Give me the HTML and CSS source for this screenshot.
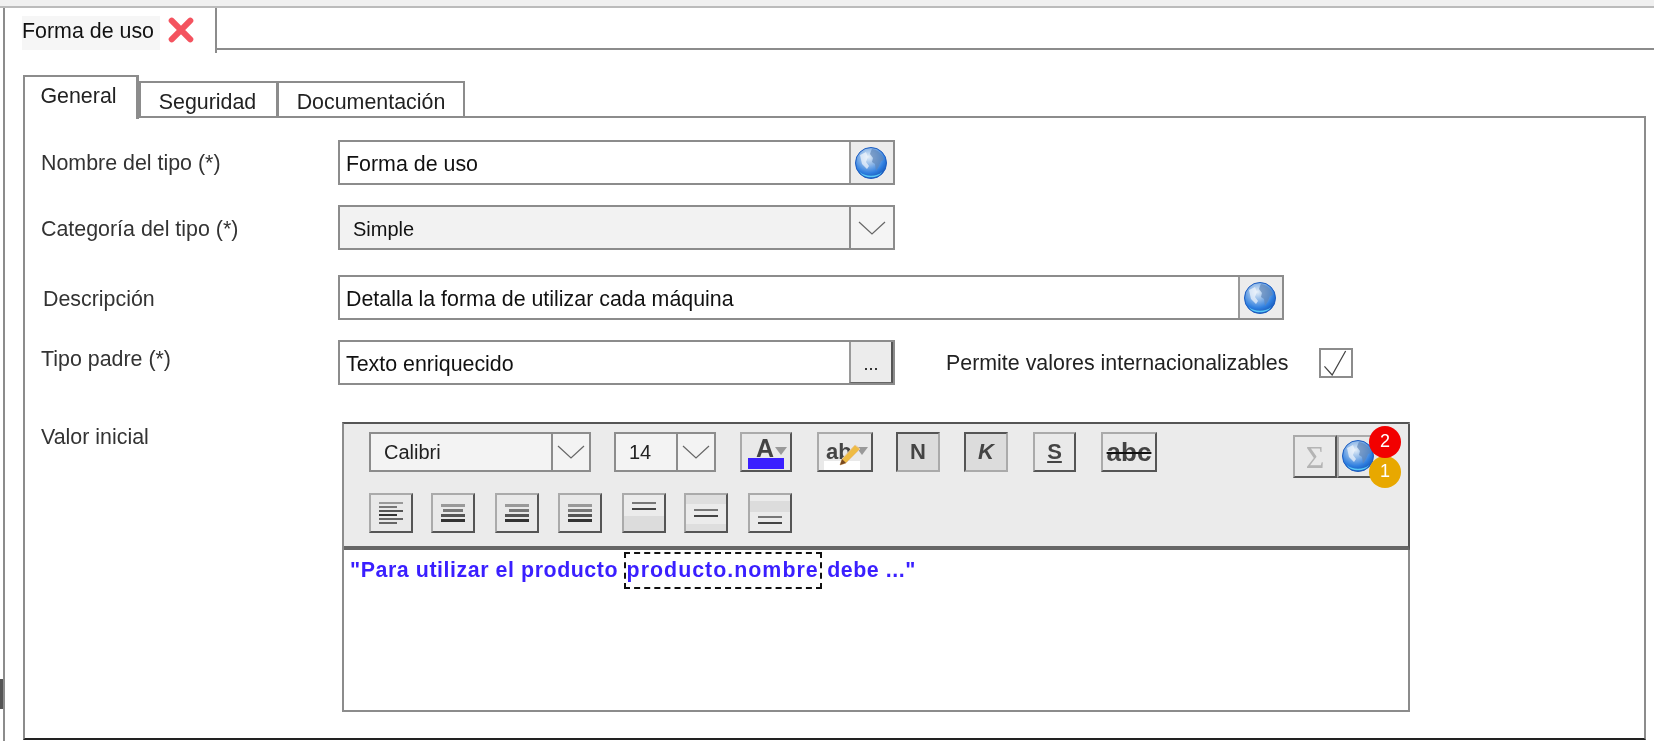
FILE: index.html
```html
<!DOCTYPE html>
<html lang="es">

<head>
  <meta charset="UTF-8" />
  <meta name="viewport" content="width=device-width, initial-scale=1.0" />
  <title>Forma de uso</title>
  <link rel="stylesheet" href="styles.css">
</head>

<body>
  <svg class="defs" width="0" height="0">
    <defs>
      <radialGradient id="globeFill" cx="42%" cy="30%" r="75%">
        <stop offset="0" stop-color="#e4eef8" />
        <stop offset="0.35" stop-color="#8fb8e8" />
        <stop offset="0.7" stop-color="#2f7fe0" />
        <stop offset="1" stop-color="#1250b0" />
      </radialGradient>
      <symbol id="globe" viewBox="0 0 32 32">
        <circle cx="16" cy="16" r="15.5" fill="url(#globeFill)" stroke="#1c5cc0" />
        <path d="M17 2c6 1 11 5 12 11l-3 1-2 5-3 5-1-7-3-2 1-4-3-4 1-3z" fill="#5f86b8" opacity=".7" />
        <path d="M5 8l6-3 2 5-2 5 3 4-2 3-5-5z" fill="#f2f7fc" opacity=".7" />
        <path d="M5 25c5 5 17 5 22 0-3 7-19 7-22 0z" fill="#58c8f6" />
      </symbol>
      <symbol id="chevron" viewBox="0 0 28 16">
        <polyline points="1,2 14,14 27,2" fill="none" stroke="#666" stroke-width="1.2" />
      </symbol>
    </defs>
  </svg>

  <div class="page">
    <div class="top-band"></div>

    <div class="doc">
      <div class="doc-tabs">
        <div class="doc-tab">
          <span class="doc-tab-label">Forma de uso</span>
          <svg class="close-icon" width="26" height="26" viewBox="0 0 28 28">
            <path d="M4 4l20 20M24 4L4 24" stroke="#f4535f" stroke-width="6.5" stroke-linecap="round" />
          </svg>
        </div>
        <div class="doc-tabs-rest"></div>
      </div>

      <div class="doc-body">
        <div class="tabs">
          <div class="tab tab-active">General</div>
          <div class="tab tab-seguridad">Seguridad</div>
          <div class="tab tab-doc">Documentación</div>
        </div>

        <div class="panel">
          <div class="row row-nombre">
            <label class="field-label">Nombre del tipo (*)</label>
            <div class="field field-short">
              <span class="field-value">Forma de uso</span>
              <span class="field-btn"><svg width="32" height="32"><use href="#globe" /></svg></span>
            </div>
          </div>

          <div class="row row-categoria">
            <label class="field-label label-low">Categoría del tipo (*)</label>
            <div class="field field-short field-select">
              <span class="field-value">Simple</span>
              <span class="field-btn field-arrow"><svg width="28" height="16"><use href="#chevron" /></svg></span>
            </div>
          </div>

          <div class="row row-descripcion">
            <label class="field-label label-shift">Descripción</label>
            <div class="field field-long">
              <span class="field-value">Detalla la forma de utilizar cada máquina</span>
              <span class="field-btn"><svg width="32" height="32"><use href="#globe" /></svg></span>
            </div>
          </div>

          <div class="row row-padre">
            <label class="field-label label-raised">Tipo padre (*)</label>
            <div class="field field-short">
              <span class="field-value">Texto enriquecido</span>
              <span class="field-btn field-dots">...</span>
            </div>
            <span class="check-label">Permite valores internacionalizables</span>
            <span class="checkbox">
              <svg width="30" height="26" viewBox="0 0 30 27">
                <polyline points="3,17 11,26 25,1" fill="none" stroke="#444" stroke-width="1.3" />
              </svg>
            </span>
          </div>

          <div class="row row-valor">
            <label class="field-label label-top">Valor inicial</label>
            <div class="editor">
              <div class="toolbar">
                <div class="tool-row">
                  <div class="tool-select select-font">
                    <span class="tool-select-value">Calibri</span>
                    <span class="tool-select-arrow"><svg width="28" height="16"><use href="#chevron" /></svg></span>
                  </div>
                  <div class="tool-select select-size">
                    <span class="tool-select-value">14</span>
                    <span class="tool-select-arrow"><svg width="28" height="16"><use href="#chevron" /></svg></span>
                  </div>
                  <button class="tool btn-color"><b class="glyph-a">A</b><i class="drop"></i><i class="color-bar"></i></button>
                  <button class="tool btn-mark">
                    <i class="mark-bar"></i><b class="glyph-ab">ab</b><i class="drop"></i>
                    <svg class="pencil" width="22" height="22" viewBox="0 0 22 22">
                      <path d="M16 1l5 4L7 19l-6 2 2-6z" fill="#eebb44" stroke="#e8c8a0" />
                      <path d="M1 21l2-6 4 4z" fill="#7a4a20" />
                    </svg>
                  </button>
                  <button class="tool tool-down btn-n">N</button>
                  <button class="tool tool-down btn-k">K</button>
                  <button class="tool btn-s">S</button>
                  <button class="tool btn-abc">abc</button>
                  <div class="tool-end">
                    <button class="tool btn-sigma">Σ</button>
                    <button class="tool btn-globe"><svg width="32" height="32"><use href="#globe" /></svg></button>
                    <span class="badge badge-red">2</span>
                    <span class="badge badge-yellow">1</span>
                  </div>
                </div>

                <div class="tool-row tool-row-2">
                  <button class="tool align a-left"><i></i><i></i><i></i><i></i><i></i><i></i></button>
                  <button class="tool align a-center"><i></i><i></i><i></i><i></i></button>
                  <button class="tool align a-right"><i></i><i></i><i></i><i></i></button>
                  <button class="tool align a-just"><i></i><i></i><i></i><i></i></button>
                  <button class="tool valign v-top"><i></i><i></i></button>
                  <button class="tool valign v-mid"><i></i><i></i></button>
                  <button class="tool valign v-bot"><i></i><i></i></button>
                </div>
              </div>

              <div class="editor-text">"Para utilizar el producto <span class="token">producto.nombre</span> debe ..."</div>
            </div>
          </div>
        </div>
      </div>
    </div>
    <span class="edge-mark"></span>
  </div>
</body>

</html>
```

FILE: styles.css
```css
html,
body {
  margin: 0;
  height: 100%;
  overflow: hidden;
  background: #fff;
}

.defs {
  position: absolute;
}

.page {
  position: relative;
  width: 1654px;
  height: 741px;
  overflow: hidden;
  background: #fff;
  color: #222;
  font-family: "Liberation Sans", Arial, sans-serif;
  font-size: 21.4px;
  filter: blur(0.5px);
}

.top-band {
  box-sizing: border-box;
  height: 8px;
  background: #f0f0f0;
  border-bottom: 2px solid #bbb;
}

.doc {
  margin-left: 3px;
  height: 733px;
  box-sizing: border-box;
  border-left: 2px solid #8c8c8c;
}

.doc-tabs {
  display: flex;
  height: 42px;
}

.doc-tab {
  width: 212px;
  box-sizing: border-box;
  height: 45px;
  display: flex;
  align-items: flex-start;
  border-right: 2px solid #8c8c8c;
  background: #fff;
  padding: 8px 0 0 17px;
}

.doc-tab-label {
  display: block;
  width: 138px;
  height: 34px;
  line-height: 30px;
  background: #f6f6f6;
  color: #111;
}

.close-icon {
  margin: 1px 0 0 8px;
}

.doc-tabs-rest {
  flex: 1;
  border-bottom: 2px solid #8c8c8c;
}

.doc-body {
  padding: 25px 8px 0 18px;
}

.tabs {
  display: flex;
  align-items: flex-end;
  height: 41px;
  position: relative;
}

.tab {
  box-sizing: border-box;
  border: 2px solid #8c8c8c;
  border-bottom: 0;
  background: #fff;
  text-align: center;
  color: #222;
}

.tab-active {
  width: 116px;
  height: 44px;
  line-height: 38px;
  margin-bottom: -3px;
  position: relative;
  z-index: 1;
  border-right-width: 3px;
  padding-right: 4px;
}

.tab-seguridad {
  width: 139px;
  height: 35px;
  line-height: 38px;
  padding-right: 2px;
}

.tab-doc {
  width: 188px;
  height: 35px;
  line-height: 38px;
  margin-left: -1px;
}

.panel {
  box-sizing: border-box;
  height: 624px;
  border: 2px solid #8c8c8c;
  border-bottom: 2px solid #222;
  padding-left: 16px;
}

.row {
  display: flex;
  align-items: center;
}

.row-nombre {
  margin-top: 22px;
}

.row-categoria {
  margin-top: 20px;
}

.row-descripcion {
  margin-top: 25px;
}

.row-padre {
  margin-top: 20px;
}

.row-valor {
  margin-top: 37px;
  align-items: flex-start;
}

.field-label {
  width: 297px;
  flex: none;
  color: #333;
  position: relative;
  top: 1px;
}

.label-low {
  top: 2px;
}

.label-shift {
  padding-left: 2px;
  width: 295px;
  top: 2px;
}

.label-raised {
  top: -3px;
}

.label-top {
  width: 301px;
  margin-top: 2px;
}

.field {
  display: flex;
  box-sizing: border-box;
  height: 45px;
  border: 2px solid #8c8c8c;
  background: #fff;
  line-height: 45px;
  color: #111;
}

.field-short {
  width: 557px;
}

.field-long {
  width: 946px;
}

.field-select {
  background: #f2f2f2;
}

.field-value {
  flex: 1;
  padding-left: 6px;
}

.field-select .field-value {
  padding-left: 13px;
  font-size: 20px;
}

.field-btn {
  width: 44px;
  flex: none;
  display: flex;
  align-items: center;
  justify-content: center;
  box-sizing: border-box;
  border-left: 2px solid #9a9a9a;
  background: #ececec;
}

.field-btn svg {
  margin-right: 3px;
}

.field-arrow {
  background: #f4f4f4;
  border-left-color: #8c8c8c;
}

.field-arrow svg {
  margin-right: 0;
}

.field-dots {
  border-right: 2px solid #555;
  border-bottom: 1px solid #666;
  line-height: 44px;
  align-items: flex-start;
  font-size: 18px;
}

.check-label {
  margin-left: 51px;
  color: #222;
  position: relative;
  top: 1px;
}

.checkbox {
  width: 34px;
  height: 30px;
  box-sizing: border-box;
  margin-left: 31px;
  border: 2px solid #8c8c8c;
  background: #fff;
}

.checkbox svg {
  display: block;
}

.editor {
  box-sizing: border-box;
  width: 1068px;
  height: 290px;
  border: 2px solid #8c8c8c;
  border-top-color: #555;
}

.toolbar {
  box-sizing: border-box;
  height: 126px;
  background: #ebebeb;
  border-right: 2px solid #555;
  border-bottom: 4px solid #666;
  margin-right: -2px;
  padding: 8px 0 0 25px;
}

.tool-row {
  display: flex;
  height: 40px;
  position: relative;
}

.tool-row-2 {
  margin-top: 21px;
}

.tool-select {
  display: flex;
  box-sizing: border-box;
  height: 40px;
  border: 2px solid #8c8c8c;
  background: #f3f3f3;
  line-height: 36px;
  color: #222;
  font-size: 20px;
}

.select-font {
  width: 222px;
}

.select-size {
  width: 102px;
  margin-left: 23px;
}

.tool-select-value {
  flex: 1;
  padding-left: 13px;
}

.tool-select-arrow {
  width: 38px;
  flex: none;
  box-sizing: border-box;
  border-left: 2px solid #8c8c8c;
  display: flex;
  align-items: center;
  justify-content: center;
}

.tool {
  display: block;
  box-sizing: border-box;
  position: relative;
  height: 40px;
  padding: 0;
  border: 2px solid;
  border-color: #aaa #555 #555 #aaa;
  background: #e9e9e9;
  color: #444;
  font-family: "Liberation Sans", Arial, sans-serif;
  font-size: 22px;
  font-weight: bold;
  line-height: 34px;
  text-align: center;
}

.tool-down {
  border-color: #555 #aaa #aaa #555;
  background: #dcdcdc;
}

.btn-color {
  width: 52px;
  margin-left: 24px;
}

.glyph-a {
  position: absolute;
  left: 14px;
  top: -3px;
  font-size: 25px;
}

.drop {
  position: absolute;
  right: 3px;
  top: 13px;
  border: 6px solid transparent;
  border-top: 8px solid #999;
}

.color-bar {
  position: absolute;
  left: 6px;
  right: 6px;
  bottom: 1px;
  height: 11px;
  background: #3a1fff;
}

.btn-mark {
  width: 56px;
  margin-left: 25px;
  overflow: hidden;
}

.glyph-ab {
  position: absolute;
  left: 7px;
  top: 1px;
}

.mark-bar {
  position: absolute;
  left: 5px;
  right: 11px;
  bottom: 0;
  height: 9px;
  background: #fff;
}

.pencil {
  position: absolute;
  left: 20px;
  top: 10px;
}

.btn-n {
  width: 44px;
  margin-left: 23px;
}

.btn-k {
  width: 44px;
  margin-left: 24px;
  font-style: italic;
}

.btn-s {
  width: 43px;
  margin-left: 25px;
  text-decoration: underline;
}

.btn-abc {
  width: 56px;
  margin-left: 25px;
  font-size: 26px;
  text-decoration: line-through;
  text-decoration-color: #111;
}

.tool-end {
  display: flex;
  margin-left: 136px;
  margin-top: 3px;
  position: relative;
}

.btn-sigma {
  width: 44px;
  height: 43px;
  font-family: "Liberation Serif", serif;
  font-size: 32px;
  font-weight: normal;
  color: #b4b4b4;
  line-height: 38px;
}

.btn-globe {
  width: 44px;
  height: 43px;
  border-right: 0;
}

.btn-globe svg {
  position: absolute;
  left: 3px;
  top: 3px;
}

.badge {
  position: absolute;
  left: 76px;
  width: 32px;
  height: 32px;
  border-radius: 50%;
  color: #fff;
  font-size: 18px;
  line-height: 30px;
  text-align: center;
}

.badge-red {
  top: -9px;
  background: #f20000;
  z-index: 1;
}

.badge-yellow {
  top: 21px;
  background: #e8a800;
}

.align,
.valign {
  width: 44px;
  display: flex;
  flex-direction: column;
  align-items: center;
  justify-content: center;
  gap: 2px;
}

.a-left {
  margin-right: 18px;
  align-items: flex-start;
  padding-left: 8px;
}

.a-center {
  margin-right: 20px;
}

.a-right {
  margin-right: 19px;
  align-items: flex-end;
  padding-right: 8px;
}

.a-just {
  margin-right: 20px;
}

.v-top {
  margin-right: 18px;
}

.v-mid {
  margin-right: 20px;
}

.align i,
.valign i {
  display: block;
  width: 24px;
  height: 3px;
  background: #555;
}

.align i:nth-child(2) {
  background: #777;
  width: 20px;
}

.align i:nth-child(1) {
  background: #999;
}

.align i:nth-child(3) {
  background: #555;
}

.align i:nth-child(4) {
  background: #333;
}

.a-left i {
  height: 2px;
  background: #666;
}

.a-left i:nth-child(even) {
  width: 18px;
}

.a-just i:nth-child(2) {
  width: 24px;
}

.valign {
  gap: 4px;
}

.valign i {
  height: 2px;
  background: #777;
}

.valign i:last-child {
  background: #444;
}

.v-top {
  justify-content: flex-start;
  padding-top: 7px;
  background: linear-gradient(#ebebeb 58%, #dcdcdc 58%);
}

.v-mid {
  background: linear-gradient(#dedede 25%, #ebebeb 25%, #ebebeb 80%, #dedede 80%);
}

.v-bot {
  justify-content: flex-end;
  padding-bottom: 7px;
  background: linear-gradient(#ebebeb 18%, #dcdcdc 18%, #dcdcdc 48%, #ebebeb 48%);
}

.editor-text {
  padding: 9px 0 0 6px;
  line-height: 23px;
  color: #3a1fff;
  font-weight: bold;
  font-size: 21.4px;
  letter-spacing: 0.55px;
}

.token {
  display: inline-block;
  outline: 2px dashed #111;
  outline-offset: -1px;
  padding: 6px 2px;
  margin: -6px 0;
  letter-spacing: 1px;
}

.edge-mark {
  position: absolute;
  left: 0;
  top: 679px;
  width: 3px;
  height: 30px;
  background: #555;
}
```
